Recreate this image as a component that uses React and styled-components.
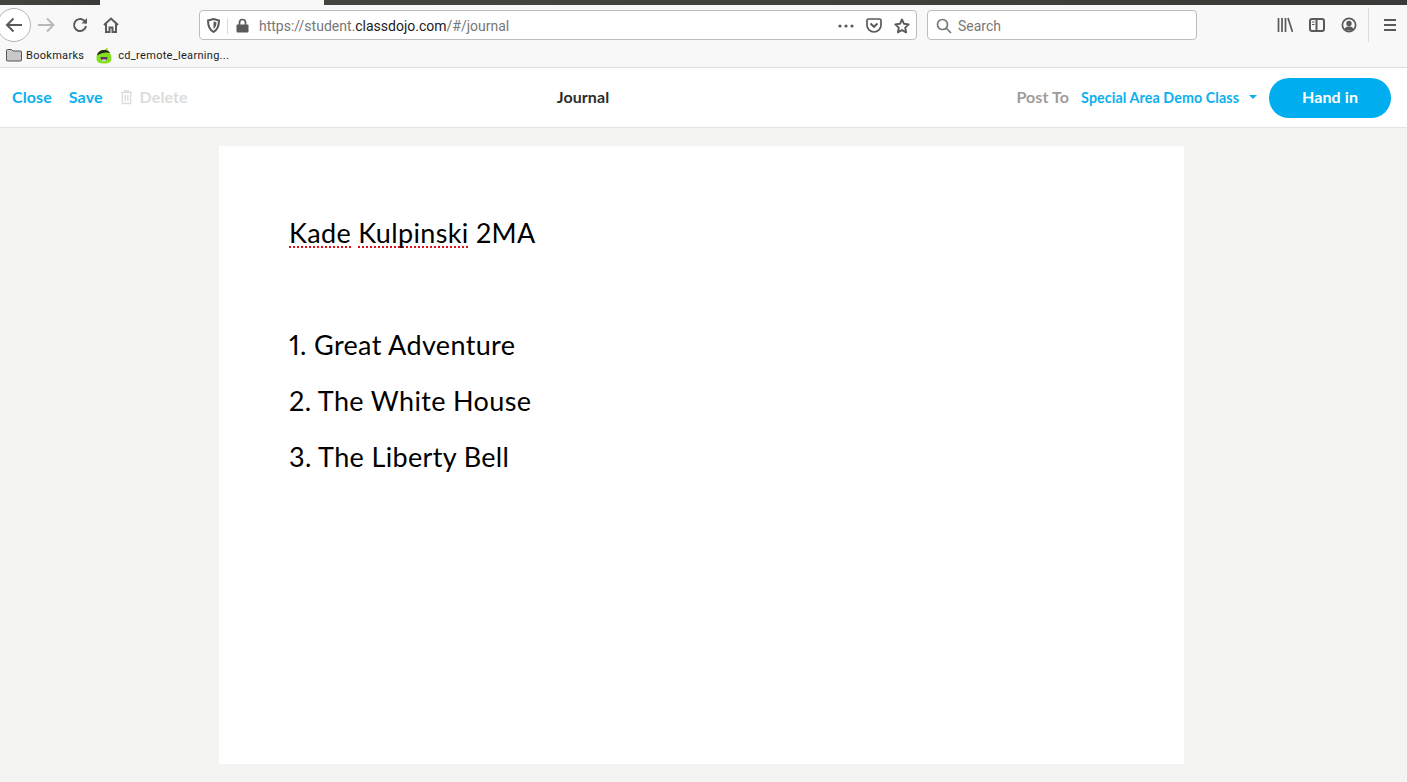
import React from 'react'
import styled, { createGlobalStyle } from 'styled-components'

const BLUE = '#0bafef'

const GlobalStyle = createGlobalStyle`
	html, body {
		margin: 0;
		padding: 0;
		height: 100%;
		overflow: hidden;
		background: #f4f4f2;
	}
`

const Page = styled.div`
	width: 1407px;
	height: 782px;
	display: flex;
	flex-direction: column;
	font-family: 'Lato', 'Liberation Sans', sans-serif;
	background: #f4f4f2;
`

const TabStrip = styled.div`
	height: 5px;
	flex: none;
	display: flex;
	background: #3a3a3a;
`

const StripPiece = styled.div`
	width: ${({ $width }) => $width}px;
	background: ${({ $light }) => ($light ? '#f8f8f8' : 'linear-gradient(90deg, #45453f, #3b3a38)')};
`

const Chrome = styled.div`
	flex: none;
	background: #f8f8f8;
	border-bottom: 1px solid #dcdcdc;
`

const Toolbar = styled.div`
	height: 40px;
	display: flex;
	align-items: center;
	font-family: 'Roboto', 'Liberation Sans', sans-serif;
`

const BackButton = styled.div`
	width: 32px;
	height: 32px;
	margin-left: -3px;
	flex: none;
	border: 1px solid #b4b4b4;
	border-radius: 50%;
	background: #fff;
	display: flex;
	align-items: center;
	justify-content: center;
`

const NavIcon = styled.div`
	width: ${({ $width }) => $width || 16}px;
	height: 16px;
	margin-left: ${({ $gap }) => $gap}px;
	flex: none;
	display: flex;
`

const UrlBar = styled.div`
	box-sizing: border-box;
	width: ${({ $width }) => $width}px;
	height: 30px;
	margin-left: ${({ $gap }) => $gap}px;
	padding-top: 1px;
	flex: none;
	display: flex;
	align-items: center;
	background: #fff;
	border: 1px solid #bdbdbd;
	border-radius: 4px;
	font-size: 14px;
`

const ShieldBox = styled.div`
	width: 28px;
	height: 16px;
	padding-left: 7px;
	box-sizing: border-box;
	flex: none;
	display: flex;
	border-right: 1px solid #d8d8d8;
`

const UrlIcon = styled.div`
	flex: none;
	display: flex;
	margin-left: ${({ $gap }) => $gap}px;
`

const UrlText = styled.div`
	margin-left: 10px;
	flex: 1;
	color: #777;
	white-space: nowrap;
`

const UrlHost = styled.span`
	color: #1b1b1b;
`

const SearchText = styled.div`
	margin-left: 6px;
	color: #777;
`

const ToolbarDivider = styled.div`
	width: 1px;
	height: 34px;
	margin-left: 11px;
	flex: none;
	background: #dcdcdc;
`

const Bookmarks = styled.div`
	height: 22px;
	box-sizing: border-box;
	padding: 0 0 2px 6px;
	display: flex;
	align-items: center;
	font-family: 'Roboto', 'Liberation Sans', sans-serif;
	font-size: 11px;
	letter-spacing: 0.3px;
	color: #1b1b1b;
`

const Bookmark = styled.div`
	display: flex;
	align-items: center;
	margin-right: 12px;
`

const BookmarkLabel = styled.span`
	margin-left: ${({ $gap }) => $gap}px;
`

const AppBar = styled.div`
	flex: none;
	height: 59px;
	display: flex;
	align-items: center;
	padding: 0 16px 0 12px;
	background: #fff;
	border-bottom: 1px solid #e4e4e8;
	font-size: 16px;
	font-weight: 700;
	letter-spacing: 0.1px;
`

const BarAction = styled.a`
	display: flex;
	align-items: center;
	margin-right: 17px;
	padding-bottom: 2px;
	color: ${({ $disabled }) => ($disabled ? '#dcdcdc' : BLUE)};
`

const TrashIcon = styled.svg`
	margin-right: 7px;
	flex: none;
`

const Title = styled.div`
	margin-left: 352px;
	padding-bottom: 2px;
	color: #2d2d2d;
`

const RightGroup = styled.div`
	margin-left: auto;
	display: flex;
	align-items: center;
`

const PostTo = styled.span`
	padding-bottom: 2px;
	color: #a09c98;
`

const ClassSelect = styled.div`
	display: flex;
	align-items: center;
	margin-left: 12px;
	padding-bottom: 1px;
	font-size: 14.250px;
	color: ${BLUE};
`

const Caret = styled.span`
	width: 0;
	height: 0;
	margin-left: 10px;
	border-left: 4px solid transparent;
	border-right: 4px solid transparent;
	border-top: 4px solid ${BLUE};
`

const HandIn = styled.button`
	width: 122px;
	height: 40px;
	margin-left: 12px;
	padding: 0 0 2px;
	border: 0;
	border-radius: 20px;
	background: #00aeef;
	color: #fff;
	font-family: inherit;
	font-size: 16px;
	font-weight: 700;
	letter-spacing: 0.1px;
`

const Paper = styled.div`
	box-sizing: border-box;
	width: 965px;
	height: 618px;
	margin: 18px 0 0 219px;
	padding: 59px 70px;
	background: #fff;
	color: #000;
	font-size: 27px;
	letter-spacing: 0.35px;
	font-feature-settings: 'pnum' 1;
`

const Line = styled.div`
	height: 56px;
	line-height: 56px;
`

const Misspelled = styled.span`
	text-decoration: underline dotted #e0101a 2px;
	text-underline-offset: 3px;
	text-decoration-skip-ink: none;
`

const stroke = { fill: 'none', stroke: '#5a5a5a', strokeWidth: 1.7 }

const Favicon = () => (
	<svg width="16" height="17" viewBox="0 0 16 17">
		<path d="M.5 11.500C.5 6 3 3 8 3c1 0 2-1 3-2.500.5 1.500.8 2.800 1.200 3.500C14.500 6 15.500 8.500 15.500 11.500c0 4-3 5-7.500 5s-7.500-1-7.500-5z" fill="#84e01e" />
		<path d="M1 8.500C2 4.500 5 3 8 3s5 1 6 3C10.500 4.800 5.500 5.500 1 8.500z" fill="#26261f" />
		<path d="M4.500 10h7c0 2.800-1.500 4-3.500 4s-3.500-1.200-3.500-4z" fill="#5a3a6a" />
		<path d="M6 12.500h4V14H6z" fill="#f0d0e0" />
	</svg>
)

const App = () => (
	<Page>
		<GlobalStyle />
		<TabStrip>
			<StripPiece $width={100} />
			<StripPiece $width={224} $light />
			<StripPiece $width={1083} />
		</TabStrip>
		<Chrome>
			<Toolbar>
				<BackButton>
					<svg width="18" height="16" viewBox="0 0 18 16" {...stroke} strokeWidth="2">
						<path d="M17 8H2M8.500 1.500 2 8l6.500 6.500" />
					</svg>
				</BackButton>
				<NavIcon $gap={7} $width={17}>
					<svg width="17" height="16" viewBox="0 0 17 16" fill="none" stroke="#b8b8b8" strokeWidth="2">
						<path d="M0 8h15M9 1.500 15.500 8 9 14.500" />
					</svg>
				</NavIcon>
				<NavIcon $gap={17}>
					<svg width="16" height="16" viewBox="0 0 16 16" {...stroke} strokeWidth="2">
						<path d="M14 9a6 6 0 1 1-2-5.500L14.500 6" />
						<path d="M15 1v5.500H9.500" fill="#5a5a5a" stroke="none" />
					</svg>
				</NavIcon>
				<NavIcon $gap={15}>
					<svg width="16" height="16" viewBox="0 0 16 16" {...stroke} strokeWidth="2">
						<path d="M1 8 8 1.500 15 8M3 6.500V15h3.500v-4.500h3V15H13V6.500" />
					</svg>
				</NavIcon>
				<UrlBar $gap={80} $width={718}>
					<ShieldBox>
						<svg width="13" height="15" viewBox="0 0 13 15" {...stroke} strokeWidth="2">
							<path d="M1 2.500 6.500 1 12 2.500C12 8 11 11.500 6.500 14 2 11.500 1 8 1 2.500z" />
							<path d="M6.500 3.500 9.500 4.300c0 3-.6 5-3 6.700z" fill="#5a5a5a" stroke="none" />
						</svg>
					</ShieldBox>
					<UrlIcon $gap={8}>
						<svg width="13" height="15" viewBox="0 0 13 15">
							<path d="M3.500 7V4.500a3 3 0 0 1 6 0V7" fill="none" stroke="#5a5a5a" strokeWidth="1.700" />
							<rect x="0.500" y="6.500" width="12" height="8" rx="1" fill="#5a5a5a" />
						</svg>
					</UrlIcon>
					<UrlText>
						https://student.<UrlHost>classdojo.com</UrlHost>/#/journal
					</UrlText>
					<UrlIcon>
						<svg width="16" height="4" viewBox="0 0 16 4" fill="#5a5a5a">
							<circle cx="2" cy="2" r="1.600" />
							<circle cx="8" cy="2" r="1.600" />
							<circle cx="14" cy="2" r="1.600" />
						</svg>
					</UrlIcon>
					<UrlIcon $gap={12}>
						<svg width="16" height="15" viewBox="0 0 16 15" {...stroke}>
							<path d="M2.500 1h11A1.500 1.500 0 0 1 15 2.500V7a7 7 0 0 1-14 0V2.500A1.500 1.500 0 0 1 2.500 1z" />
							<path d="m4.500 5.500 3.500 3.300 3.500-3.300" strokeWidth="2" />
						</svg>
					</UrlIcon>
					<UrlIcon $gap={12}>
						<svg width="16" height="16" viewBox="0 0 16 16" {...stroke} strokeWidth="1.900">
							<path d="m8 1.500 2 4.300 4.700.6-3.500 3.200.9 4.700L8 12l-4.100 2.300.9-4.700L1.300 6.400 6 5.800z" strokeLinejoin="round" />
						</svg>
					</UrlIcon>
					<UrlIcon $gap={6} />
				</UrlBar>
				<UrlBar $gap={10} $width={270}>
					<UrlIcon $gap={8}>
						<svg width="16" height="16" viewBox="0 0 16 16" fill="none" stroke="#777" strokeWidth="1.700">
							<circle cx="6.500" cy="6.500" r="5" />
							<path d="m10 10 5 5" />
						</svg>
					</UrlIcon>
					<SearchText>Search</SearchText>
				</UrlBar>
				<NavIcon $gap={80}>
					<svg width="16" height="16" viewBox="0 0 16 16" {...stroke}>
						<path d="M1.500 1v14M5 1v14M8.500 1v14M11 1l4.500 14" />
					</svg>
				</NavIcon>
				<NavIcon $gap={16}>
					<svg width="16" height="16" viewBox="0 0 16 16" {...stroke} strokeWidth="2">
						<rect x="1" y="2" width="14" height="12" rx="2" />
						<path d="M7.500 2v12" />
						<path d="M3 5h2.500M3 7.500h2.500" strokeWidth="1" />
					</svg>
				</NavIcon>
				<NavIcon $gap={16}>
					<svg width="16" height="16" viewBox="0 0 16 16" {...stroke}>
						<circle cx="8" cy="8" r="6.600" />
						<circle cx="8" cy="6.500" r="2.700" fill="#5a5a5a" stroke="none" />
						<path d="M3.500 12c1-2 2.500-2.500 4.500-2.500s3.500.5 4.500 2.500C11 14 5 14 3.500 12z" fill="#5a5a5a" stroke="none" />
					</svg>
				</NavIcon>
				<ToolbarDivider />
				<NavIcon $gap={15} $width={12}>
					<svg width="12" height="16" viewBox="0 0 12 16" stroke="#5a5a5a" strokeWidth="2">
						<path d="M0 3h12M0 8h12M0 13h12" />
					</svg>
				</NavIcon>
			</Toolbar>
			<Bookmarks>
				<Bookmark>
					<svg width="16" height="14" viewBox="0 0 16 14">
						<path d="M.5 2.500a1 1 0 0 1 1-1h4l1.500 1.500h7.500a1 1 0 0 1 1 1v8a1 1 0 0 1-1 1h-13a1 1 0 0 1-1-1z" fill="#c8c8c8" stroke="#555" />
					</svg>
					<BookmarkLabel $gap={4}>Bookmarks</BookmarkLabel>
				</Bookmark>
				<Bookmark>
					<Favicon />
					<BookmarkLabel $gap={6}>cd_remote_learning...</BookmarkLabel>
				</Bookmark>
			</Bookmarks>
		</Chrome>
		<AppBar>
			<BarAction>Close</BarAction>
			<BarAction>Save</BarAction>
			<BarAction $disabled>
				<TrashIcon width="13" height="16" viewBox="0 0 14 16" fill="none" stroke="#dcdcdc" strokeWidth="1.500">
					<path d="M1 3h12M5 3V1.500h4V3M2.500 3v12h9V3M5.500 5.500v7M8.500 5.500v7" />
				</TrashIcon>
				Delete
			</BarAction>
			<Title>Journal</Title>
			<RightGroup>
				<PostTo>Post To</PostTo>
				<ClassSelect>
					Special Area Demo Class
					<Caret />
				</ClassSelect>
				<HandIn>Hand in</HandIn>
			</RightGroup>
		</AppBar>
		<Paper>
			<Line>
				<Misspelled>Kade</Misspelled> <Misspelled>Kulpinski</Misspelled> 2MA
			</Line>
			<Line>
				<br />
			</Line>
			<Line>1. Great Adventure</Line>
			<Line>2. The White House</Line>
			<Line>3. The Liberty Bell</Line>
		</Paper>
	</Page>
)

export default App
